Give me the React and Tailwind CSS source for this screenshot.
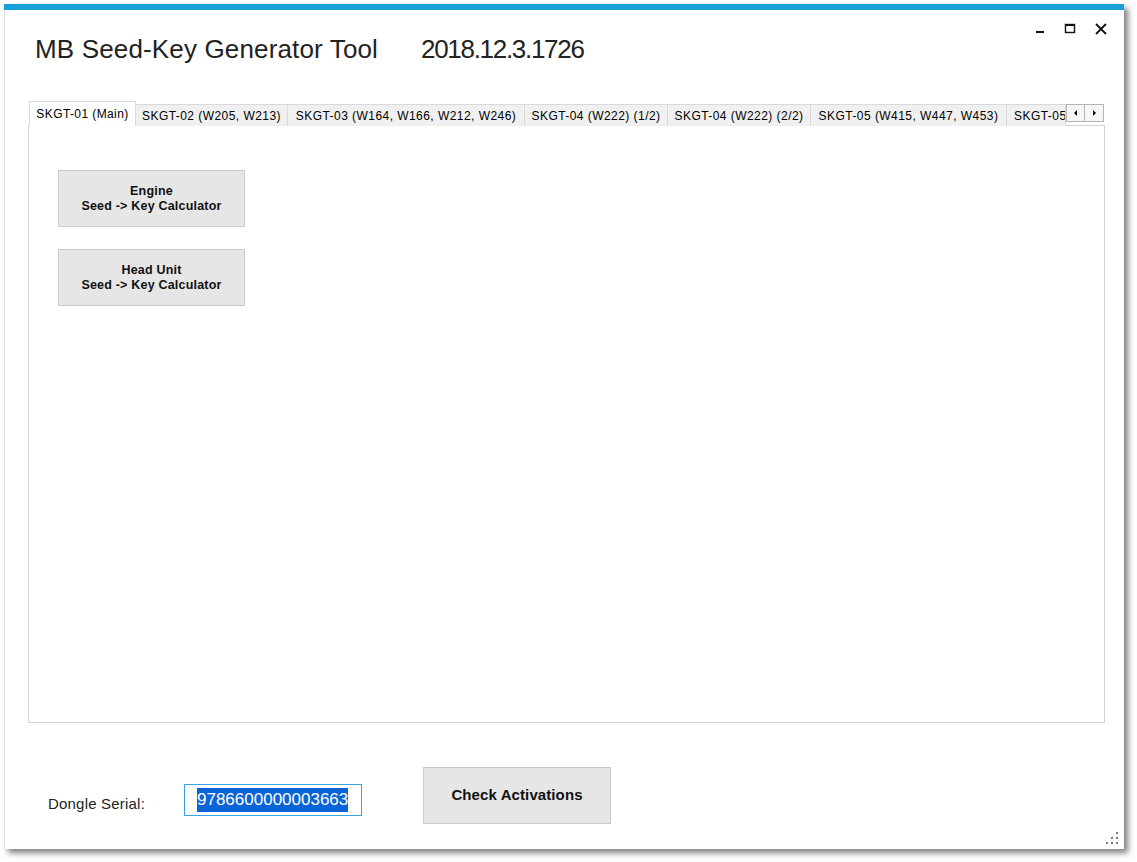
import React from "react";

const tabs = [
  { label: "SKGT-01 (Main)", w: 107, active: true },
  { label: "SKGT-02 (W205, W213)", w: 152 },
  { label: "SKGT-03 (W164, W166, W212, W246)", w: 237 },
  { label: "SKGT-04 (W222) (1/2)", w: 143 },
  { label: "SKGT-04 (W222) (2/2)", w: 143 },
  { label: "SKGT-05 (W415, W447, W453)", w: 196 },
  { label: "SKGT-05 (W176)", w: 59, clip: true },
];

function CalcButton({ title }) {
  return (
    <button className="w-[187px] h-[57px] bg-[#e6e6e6] border border-[#cccccc] flex flex-col items-center justify-center text-[12.5px] tracking-[0.2px] leading-[15px] font-bold text-[#111] font-['Liberation_Sans',Arial,sans-serif]">
      <span>{title}</span>
      <span>Seed -&gt; Key Calculator</span>
    </button>
  );
}

export default function App() {
  return (
    <div className="w-[1137px] h-[862px] bg-white pl-[4px] pt-[4px] font-['Liberation_Sans',Arial,sans-serif]">
      <div className="relative w-[1120px] h-[845px] bg-white border-l border-[#e3e3e3] shadow-[4px_4px_6px_rgba(0,0,0,0.5)] flex flex-col">
        <div className="h-[6px] bg-[#17a0d7] -ml-px" />
        <div className="flex justify-between items-start h-[91px]">
          <div className="flex items-baseline pl-[30px] pt-[22px] text-[26px] text-[#222] leading-[34px]">
            <span className="tracking-[0.15px]">MB Seed-Key Generator Tool</span>
            <span className="ml-[43px] tracking-[-1.3px]">2018.12.3.1726</span>
          </div>
          <div className="flex items-start pt-[9px] pr-[16px]">
            <svg width="30" height="14" viewBox="0 0 30 14" className="mt-[4px]">
              <rect x="2" y="8" width="8" height="2" fill="#111" />
            </svg>
            <svg width="30" height="14" viewBox="0 0 30 14" className="mt-[4px]">
              <rect x="1.5" y="1.5" width="9" height="8" fill="none" stroke="#111" strokeWidth="1.4" />
              <rect x="1" y="1" width="10" height="2" fill="#111" />
            </svg>
            <svg width="14" height="14" viewBox="0 0 14 14" className="mt-[4px]">
              <path d="M2 1 L12 11 M12 1 L2 11" stroke="#111" strokeWidth="1.8" />
            </svg>
          </div>
        </div>

        <div className="pl-[23px] w-[1100px]">
          <div className="flex items-end h-[25px] relative z-10">
            {tabs.map((t, i) => (
              <div
                key={i}
                style={{ width: t.w }}
                className={
                  t.active
                    ? "h-[25px] bg-white border border-b-0 border-[#d9d9d9] flex items-start justify-center pt-[3px] text-[12px] tracking-[0.4px] text-[#000] whitespace-nowrap overflow-hidden ml-px"
                    : "h-[22px] bg-[#f0f0f0] border border-l-0 border-b-0 border-[#d9d9d9] flex items-center text-[12px] tracking-[0.45px] text-[#000] whitespace-nowrap overflow-hidden " +
                      (t.clip ? "justify-start pl-[7px]" : "justify-center")
                }
              >
                {t.label}
              </div>
            ))}
            <div className="flex self-start mt-[3px]">
              <div className="w-[19px] h-[18px] bg-[#f6f6f6] border border-[#b5b5b5] flex items-center justify-center">
                <svg width="6" height="8" viewBox="0 0 6 8"><path d="M4 1 L1 4 L4 7 Z" fill="#000" /></svg>
              </div>
              <div className="w-[19px] h-[18px] bg-[#f6f6f6] border border-l-0 border-[#b5b5b5] flex items-center justify-center">
                <svg width="6" height="8" viewBox="0 0 6 8"><path d="M2 1 L5 4 L2 7 Z" fill="#000" /></svg>
              </div>
            </div>
          </div>
          <div className="-mt-px w-[1077px] h-[598px] border border-[#d4d4d4] bg-white flex flex-col gap-[22px] pl-[29px] pt-[44px]">
            <CalcButton title="Engine" />
            <CalcButton title="Head Unit" />
          </div>
        </div>

        <div className="flex items-start pl-[43px] mt-[44px]">
          <span className="w-[136px] mt-[28px] text-[15px] tracking-[0.2px] text-[#222] leading-[18px]">Dongle Serial:</span>
          <div className="w-[178px] mt-[17px] h-[32px] border border-[#3aa3de] flex items-center pl-[12px]">
            <span className="bg-[#0a64d8] text-white text-[17px] leading-[24px] tracking-[0px]">9786600000003663</span>
          </div>
          <button className="ml-[61px] w-[188px] h-[57px] bg-[#e6e6e6] border border-[#cccccc] text-[15px] tracking-[0.1px] font-bold text-[#111]">
            Check Activations
          </button>
        </div>

        <svg className="absolute right-[5px] bottom-[4px]" width="14" height="14" viewBox="0 0 14 14">
          <rect x="11" y="1" width="2" height="2" fill="#808080" />
          <rect x="6" y="6" width="2" height="2" fill="#808080" />
          <rect x="11" y="6" width="2" height="2" fill="#808080" />
          <rect x="1" y="11" width="2" height="2" fill="#808080" />
          <rect x="6" y="11" width="2" height="2" fill="#808080" />
          <rect x="11" y="11" width="2" height="2" fill="#808080" />
        </svg>
      </div>
    </div>
  );
}
